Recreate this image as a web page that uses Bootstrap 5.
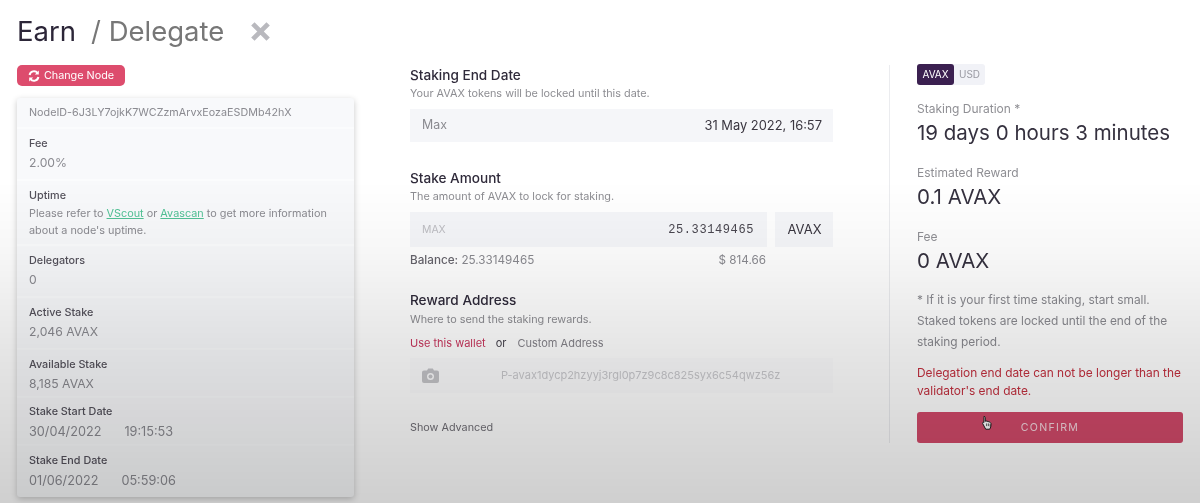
<!DOCTYPE html>
<html lang="en"><head><meta charset="utf-8"><title>Earn / Delegate</title>
<link href="https://cdn.jsdelivr.net/npm/bootstrap@5.3.0/dist/css/bootstrap.min.css" rel="stylesheet">
<style>
html,body{height:503px;overflow:hidden}
body{font-family:Inter,"Noto Sans",sans-serif;background:#fff;color:#2e2a3a}
.shade{position:fixed;inset:0;pointer-events:none;z-index:5;background:linear-gradient(180deg,rgba(0,0,0,0) 36%,rgba(0,0,0,.03) 50%,rgba(0,0,0,.1) 70%,rgba(0,0,0,.19) 100%)}
.page{padding:13px 17px 0 17px;filter:blur(.45px)}
.head{height:36px;font-size:27.5px;line-height:36px;color:#777;gap:15px}
.head b{font-weight:400;color:#2c2638}
.x-ic{width:21px;height:21px;margin-left:11px;flex:none}
.cols{margin-top:16px}
.lcol{width:337px;flex:none}
.mcol{width:423px;flex:none;margin-left:56px}
.rcol{width:294px;flex:none;margin-left:56px;padding-left:27px;border-left:1px solid #ebecef;height:378px}
.chg{background:#dd4c6d;color:#fff;border:0;font-size:10.8px;line-height:21px;height:21px;padding:0;border-radius:5px;margin-bottom:12px;width:108px;white-space:nowrap}
.chg svg{flex:none}
.info{background:#f8f9fb;box-shadow:0 2px 6px rgba(0,0,0,.22);border-radius:3px;width:337px}
.rw{padding:7px 12px 6px;border-bottom:2px solid rgba(255,255,255,.45);font-size:10.85px;line-height:17px;color:#8a8a90}
.rw:last-child{border-bottom:0}
.rw label{display:block;color:#55525c;font-size:10.8px;line-height:16px;font-weight:500;margin:0}
.val{font-size:12.2px;line-height:20px;color:#8a8a90;margin-top:1px}
.dt{font-size:12.7px;margin-top:2px}
.dt span+span{margin-left:23px}
.rw a{color:#52c296}
.nid{height:31px;padding:6px 12px;line-height:18px;font-size:10.75px}
.upt{padding-bottom:5px}
.upt .txt{display:block;margin-top:1px}
.avl{padding-bottom:2px}
.sst{padding-top:6px;padding-bottom:2px}
.h5x{font-size:13.6px;font-weight:500;line-height:20px;color:#2f2a3a;margin:0}
.subx{font-size:10.85px;line-height:16px;color:#8d8d92;margin:0 0 8px}
.bx{background:#f5f6f9;height:33px;font-size:12.4px;padding:0 11px 0 12px;color:#8a8a90}
.bx strong{font-weight:400;color:#3a3640;font-size:12.9px}
.mono{font-family:"Liberation Mono",monospace;font-size:12px;letter-spacing:.6px;color:#4a4750;margin-right:2px}
.tall{height:35px}
.unit{width:58px;color:#3a3640;font-size:13px;flex:none}
.bal{font-size:11.7px;line-height:20px;color:#8a8a90;width:356px;margin-top:3px}
.bal b{font-weight:500;color:#66646c}
.tabs{font-size:11px;line-height:16px;color:#85838a;margin-top:8px;margin-bottom:7px}
.tabs .on{color:#c8365d}
.tabs .orx{color:#45424c;margin:0 11px 0 10px}
.addr{color:#c9c9cd;font-size:11px;background:#fcfcfd}
.adv{font-size:10.8px;line-height:16px;color:#706e75;margin-top:27px}
.tg{font-size:10px;line-height:21px;height:21px;width:68px;background:#f1f2f7;border-radius:3px;color:#9a9aa2;margin-top:-1px}
.tg .on{width:37px;background:#3b2050;color:#fff;border-radius:3px;text-align:center}
.tg .off{flex:1;text-align:center}
.sl{font-size:12px;line-height:16px;color:#8f8f94}
.big{font-size:20.5px;line-height:26px;color:#35313f;margin-top:3px}
.note{font-size:11.9px;line-height:21px;color:#8a8a90;margin:15px 0 0}
.err{font-size:11.9px;line-height:18px;color:#c4303f;margin:12px 0 0;white-space:nowrap}
.cfm{background:#d24a6a;color:rgba(255,255,255,.78);border:0;border-radius:3px;height:31px;width:266px;font-size:10.6px;letter-spacing:1.3px;margin-top:12px;padding:0}
.btnwrap{position:relative;width:266px}
.cur{position:absolute;left:64px;top:3px;width:13px;height:16px;z-index:6}
.stk{margin-top:26px}
.rwd{margin-top:20px}
.rwd+.subx{margin-top:1px}
.maxs{font-size:10.4px;color:#bdbdc2}
.addr-t{margin-left:62px}
.st1{margin-top:16px}
.st2{margin-top:19px}
</style></head><body>
<div class="shade"></div>
<div class="page">
 <div class="head d-flex align-items-center"><b>Earn</b><span>/ Delegate</span>
  <svg class="x-ic" viewBox="0 0 22 22"><path d="M3 3 L19 19 M19 3 L3 19" stroke="#b9b9be" stroke-width="5"/></svg></div>
 <div class="cols d-flex">
  <div class="lcol">
   <button class="chg d-flex align-items-center justify-content-center gap-1">
    <svg width="12" height="12" viewBox="0 0 12 12" fill="none" stroke="#fff" stroke-width="2"><path d="M1.600 5 A4.500 4.500 0 0 1 9.600 3"/><path d="M10.400 7 A4.500 4.500 0 0 1 2.400 9"/><path d="M10.800.4 V4.400 H6.800 Z" fill="#fff" stroke="none"/><path d="M1.200 11.600 V7.600 H5.200 Z" fill="#fff" stroke="none"/></svg>Change Node</button>
   <div class="info">
    <div class="rw nid">NodeID-6J3LY7ojkK7WCZzmArvxEozaESDMb42hX</div>
    <div class="rw"><label>Fee</label><div class="val">2.00%</div></div>
    <div class="rw upt"><label>Uptime</label><span class="txt">Please refer to <a href="#">VScout</a> or <a href="#">Avascan</a> to get more information<br>about a node's uptime.</span></div>
    <div class="rw"><label>Delegators</label><div class="val">0</div></div>
    <div class="rw"><label>Active Stake</label><div class="val">2,046 AVAX</div></div>
    <div class="rw avl"><label>Available Stake</label><div class="val">8,185 AVAX</div></div>
    <div class="rw sst"><label>Stake Start Date</label><div class="val dt"><span>30/04/2022</span><span>19:15:53</span></div></div>
    <div class="rw"><label>Stake End Date</label><div class="val dt"><span>01/06/2022</span><span>05:59:06</span></div></div>
   </div>
  </div>
  <div class="mcol">
   <p class="h5x">Staking End Date</p>
   <p class="subx">Your AVAX tokens will be locked until this date.</p>
   <div class="bx d-flex justify-content-between align-items-center"><span>Max</span><strong>31 May 2022, 16:57</strong></div>
   <p class="h5x stk">Stake Amount</p>
   <p class="subx">The amount of AVAX to lock for staking.</p>
   <div class="d-flex">
    <div class="bx tall d-flex justify-content-between align-items-center flex-grow-1"><span class="maxs">MAX</span><span class="mono">25.33149465</span></div>
    <div class="bx tall unit d-flex align-items-center justify-content-center ms-2">AVAX</div>
   </div>
   <div class="bal d-flex justify-content-between"><span><b>Balance:</b> 25.33149465</span><span>$ 814.66</span></div>
   <p class="h5x rwd">Reward Address</p>
   <p class="subx mb-0">Where to send the staking rewards.</p>
   <div class="tabs d-flex"><span class="on">Use this wallet</span><span class="orx">or</span><span>Custom Address</span></div>
   <div class="bx tall addr d-flex align-items-center">
    <svg width="17" height="15" viewBox="0 0 17 15"><path fill="#c4c4c8" fill-rule="evenodd" d="M2 2.500h3L6.200.5h4.600L12 2.500h3a2 2 0 0 1 2 2V13a2 2 0 0 1-2 2H2a2 2 0 0 1-2-2V4.500a2 2 0 0 1 2-2zM8.500 5a3.500 3.500 0 1 0 0 7 3.500 3.500 0 0 0 0-7z"/><circle cx="8.500" cy="8.500" r="2" fill="#c4c4c8"/></svg>
    <span class="addr-t">P-avax1dycp2hzyyj3rgl0p7z9c8c825syx6c54qwz56z</span>
   </div>
   <div class="adv">Show Advanced</div>
  </div>
  <div class="rcol">
   <div class="tg d-flex"><span class="on">AVAX</span><span class="off">USD</span></div>
   <div class="sl st1">Staking Duration *</div><div class="big">19 days 0 hours 3 minutes</div>
   <div class="sl st2">Estimated Reward</div><div class="big">0.1 AVAX</div>
   <div class="sl st2">Fee</div><div class="big">0 AVAX</div>
   <p class="note">* If it is your first time staking, start small.<br>Staked tokens are locked until the end of the<br>staking period.</p>
   <p class="err">Delegation end date can not be longer than the<br>validator's end date.</p>
   <div class="btnwrap"><button class="cfm d-block">CONFIRM</button>
    <svg class="cur" viewBox="0 0 14 18"><path d="M3 1.500c1 0 1.500.8 1.500 1.500v4l1-.2 1 .2 1 .3 1 .3 1 .4c1 .5 1.500 1 1.500 2.500 0 2-.5 4-1.500 5.500H5L1.500 9.500c-.5-1 .8-1.800 1.500-1V3c0-.8 0-1.500 0-1.500z" fill="#fff" stroke="#1c1c1c" stroke-width="1.100"/><path d="M6 9.500v3M8 9.500v3M10 10v3" stroke="#1c1c1c" stroke-width=".8"/></svg></div>
  </div>
 </div>
</div>
</body></html>
